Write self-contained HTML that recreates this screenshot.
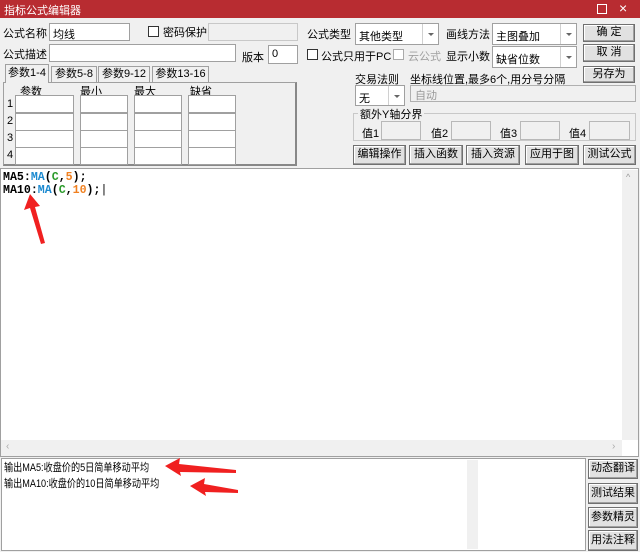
<!DOCTYPE html>
<html><head><meta charset="utf-8"><style>
*{box-sizing:border-box;margin:0;padding:0}
body{width:640px;height:552px;background:#f0f0f0;font-family:"Liberation Sans","Noto Sans CJK SC",sans-serif;font-size:11px;color:#000;position:relative;overflow:hidden}
.a{position:absolute;white-space:nowrap}
.in{position:absolute;background:#fff;border:1px solid #a0a0a0}
.dis{position:absolute;background:#f0f0f0;border:1px solid #c8c8c8}
.btn{position:absolute;background:#e1e1e1;border:1px solid #707070;box-shadow:inset -1px -1px 0 #a0a0a0,inset 1px 1px 0 #fff;text-align:center;font-size:11px}
.cb{position:absolute;width:11px;height:11px;border:1px solid #333;background:#fff}
.sel{position:absolute;background:#fff;border:1px solid #a0a0a0}
.sel .ar{position:absolute;right:0;top:0;bottom:0;width:16px;border-left:1px solid #d0d0d0}
.sel .ar:after{content:"";position:absolute;left:5px;top:50%;margin-top:-1px;border-left:3px solid transparent;border-right:3px solid transparent;border-top:3px solid #666}
.tab{position:absolute;background:#f0f0f0;border:1px solid #a0a0a0;border-bottom:none;text-align:center}
.code{font-family:"Liberation Mono",monospace;font-size:11.6px;font-weight:bold;letter-spacing:0}
</style></head><body>
<div class="a" style="left:0;top:0;width:640px;height:18px;background:#b82c31"></div>
<div class="a" style="left:4px;top:2px;color:#fff;font-size:11px">指标公式编辑器</div>
<div class="a" style="left:597px;top:4px;width:10px;height:10px;border:1px solid #fff"></div>
<div class="a" style="left:619px;top:0px;color:#fff;font-size:14px">×</div>

<div class="a" style="left:3px;top:25px">公式名称</div>
<div class="in" style="left:49px;top:23px;width:81px;height:18px;padding:2px 3px">均线</div>
<div class="cb" style="left:148px;top:26px"></div>
<div class="a" style="left:163px;top:24px">密码保护</div>
<div class="dis" style="left:208px;top:23px;width:90px;height:18px"></div>
<div class="a" style="left:307px;top:26px">公式类型</div>
<div class="sel" style="left:355px;top:23px;width:84px;height:22px;padding:4px 3px">其他类型<div class="ar"></div></div>
<div class="a" style="left:446px;top:26px">画线方法</div>
<div class="sel" style="left:492px;top:23px;width:85px;height:22px;padding:4px 3px">主图叠加<div class="ar"></div></div>
<div class="btn" style="left:583px;top:24px;width:52px;height:18px;line-height:15px">确 定</div>

<div class="a" style="left:3px;top:46px">公式描述</div>
<div class="in" style="left:49px;top:44px;width:187px;height:18px"></div>
<div class="a" style="left:242px;top:49px">版本</div>
<div class="in" style="left:268px;top:45px;width:30px;height:19px;padding:2px 3px">0</div>
<div class="cb" style="left:307px;top:49px"></div>
<div class="a" style="left:321px;top:48px">公式只用于PC</div>
<div class="cb" style="left:393px;top:49px;border-color:#aaa"></div>
<div class="a" style="left:408px;top:48px;color:#a0a0a0">云公式</div>
<div class="a" style="left:446px;top:48px">显示小数</div>
<div class="sel" style="left:492px;top:46px;width:85px;height:22px;padding:4px 3px">缺省位数<div class="ar"></div></div>
<div class="btn" style="left:583px;top:44px;width:52px;height:18px;line-height:15px">取 消</div>

<div class="a" style="left:3px;top:82px;width:294px;height:84px;border:1px solid #a0a0a0;border-right:2px solid #888;border-bottom:2px solid #888"></div>
<div class="tab" style="left:5px;top:64px;width:44px;height:19px;line-height:17px;background:#f0f0f0;z-index:2">参数1-4</div>
<div class="tab" style="left:51px;top:66px;width:46px;height:16px;line-height:15px">参数5-8</div>
<div class="tab" style="left:98px;top:66px;width:52px;height:16px;line-height:15px">参数9-12</div>
<div class="tab" style="left:152px;top:66px;width:57px;height:16px;line-height:15px">参数13-16</div>
<div class="a" style="left:20px;top:83px">参数</div>
<div class="a" style="left:80px;top:83px">最小</div>
<div class="a" style="left:134px;top:83px">最大</div>
<div class="a" style="left:190px;top:83px">缺省</div>
<div class="a" style="left:7px;top:96px;line-height:17px">1<br>2<br>3<br>4</div>
<div class="in" style="left:15px;top:95px;width:59px;height:18px"></div><div class="in" style="left:80px;top:95px;width:48px;height:18px"></div><div class="in" style="left:134px;top:95px;width:48px;height:18px"></div><div class="in" style="left:188px;top:95px;width:48px;height:18px"></div>
<div class="in" style="left:15px;top:113px;width:59px;height:18px"></div><div class="in" style="left:80px;top:113px;width:48px;height:18px"></div><div class="in" style="left:134px;top:113px;width:48px;height:18px"></div><div class="in" style="left:188px;top:113px;width:48px;height:18px"></div>
<div class="in" style="left:15px;top:130px;width:59px;height:18px"></div><div class="in" style="left:80px;top:130px;width:48px;height:18px"></div><div class="in" style="left:134px;top:130px;width:48px;height:18px"></div><div class="in" style="left:188px;top:130px;width:48px;height:18px"></div>
<div class="in" style="left:15px;top:147px;width:59px;height:18px"></div><div class="in" style="left:80px;top:147px;width:48px;height:18px"></div><div class="in" style="left:134px;top:147px;width:48px;height:18px"></div><div class="in" style="left:188px;top:147px;width:48px;height:18px"></div>

<div class="btn" style="left:583px;top:66px;width:52px;height:17px;line-height:14px">另存为</div>
<div class="a" style="left:355px;top:71px">交易法则</div>
<div class="a" style="left:410px;top:71px">坐标线位置,最多6个,用分号分隔</div>
<div class="sel" style="left:355px;top:85px;width:50px;height:21px;padding:4px 3px">无<div class="ar"></div></div>
<div class="dis" style="left:410px;top:85px;width:226px;height:17px;border-color:#b0b0b0;color:#999;padding:1px 4px">自动</div>
<div class="a" style="left:353px;top:113px;width:283px;height:28px;border:1px solid #c8c8c8"></div>
<div class="a" style="left:358px;top:106px;background:#f0f0f0;padding:0 2px">额外Y轴分界</div>
<div class="a" style="left:362px;top:125px">值1</div><div class="dis" style="left:381px;top:121px;width:40px;height:19px;border-color:#b8b8b8"></div>
<div class="a" style="left:431px;top:125px">值2</div><div class="dis" style="left:451px;top:121px;width:40px;height:19px;border-color:#b8b8b8"></div>
<div class="a" style="left:500px;top:125px">值3</div><div class="dis" style="left:520px;top:121px;width:40px;height:19px;border-color:#b8b8b8"></div>
<div class="a" style="left:569px;top:125px">值4</div><div class="dis" style="left:589px;top:121px;width:41px;height:19px;border-color:#b8b8b8"></div>
<div class="btn" style="left:353px;top:145px;width:53px;height:20px;line-height:17px">编辑操作</div>
<div class="btn" style="left:409px;top:145px;width:54px;height:20px;line-height:17px">插入函数</div>
<div class="btn" style="left:466px;top:145px;width:54px;height:20px;line-height:17px">插入资源</div>
<div class="btn" style="left:525px;top:145px;width:54px;height:20px;line-height:17px">应用于图</div>
<div class="btn" style="left:583px;top:145px;width:53px;height:20px;line-height:17px">测试公式</div>

<div class="a" style="left:0;top:168px;width:639px;height:289px;background:#fff;border:1px solid #a0a0a0"></div>
<div class="a" style="left:622px;top:170px;width:16px;height:270px;background:#f0f0f0"></div>
<div class="a" style="left:626px;top:172px;color:#999;font-size:9px">^</div>
<div class="a" style="left:1px;top:440px;width:621px;height:16px;background:#f0f0f0"></div>
<div class="a" style="left:6px;top:441px;color:#aaa;font-size:10px">‹</div>
<div class="a" style="left:612px;top:441px;color:#aaa;font-size:10px">›</div>
<div class="a code" style="left:3px;top:171px;line-height:13px">MA5:<span style="color:#1c8ad0">MA</span>(<span style="color:#2a9a2a">C</span>,<span style="color:#f08020">5</span>);<br>MA10:<span style="color:#1c8ad0">MA</span>(<span style="color:#2a9a2a">C</span>,<span style="color:#f08020">10</span>);<span style="font-weight:normal">|</span></div>

<div class="a" style="left:1px;top:458px;width:585px;height:93px;background:#fff;border:1px solid #a0a0a0"></div>
<div class="a" style="left:467px;top:460px;width:11px;height:89px;background:#f0f0f0"></div>
<div class="a" style="left:4px;top:460px;line-height:16px;font-size:11px;transform:scaleX(0.83);transform-origin:0 0">输出MA5:收盘价的5日简单移动平均<br>输出MA10:收盘价的10日简单移动平均</div>
<div class="btn" style="left:588px;top:459px;width:50px;height:20px;line-height:17px">动态翻译</div>
<div class="btn" style="left:588px;top:483px;width:50px;height:21px;line-height:18px">测试结果</div>
<div class="btn" style="left:588px;top:507px;width:50px;height:21px;line-height:18px">参数精灵</div>
<div class="btn" style="left:588px;top:530px;width:50px;height:21px;line-height:18px">用法注释</div>

<svg class="a" style="left:0;top:0" width="640" height="552">
<g fill="#f02020">
<polygon points="30,194 24,210 30,208 41,244 45,243 35,207 40,206"/>
<polygon points="165,466 180,458 179,464 236,470 236,473 180,472 181,476"/>
<polygon points="190,486 205,478 204,484 238,490 238,493 205,492 206,496"/>
</g></svg>
</body></html>
